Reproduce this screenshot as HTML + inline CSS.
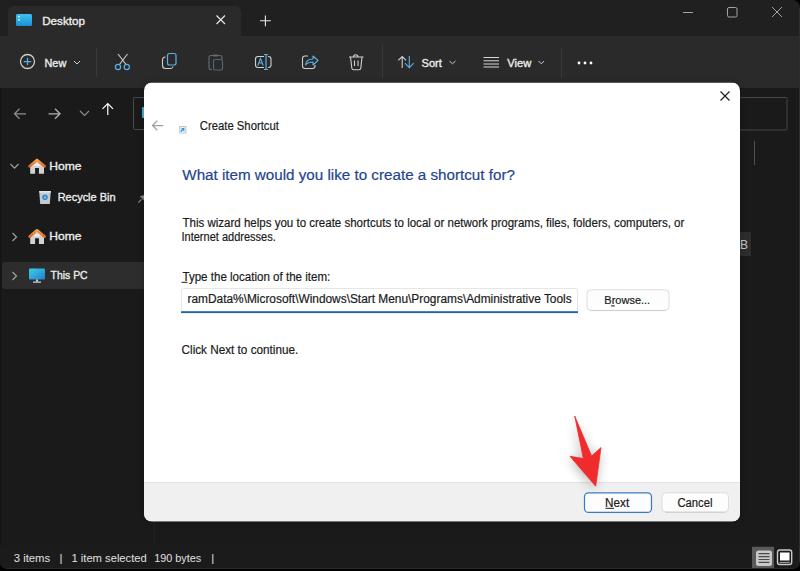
<!DOCTYPE html>
<html><head><meta charset="utf-8">
<style>
html,body{margin:0;padding:0;width:800px;height:571px;overflow:hidden;background:#000;}
svg{display:block;}
text{font-family:"Liberation Sans",sans-serif;}
</style></head><body>
<svg width="800" height="571" viewBox="0 0 800 571">
<defs>
<linearGradient id="gDesk" x1="0" y1="0" x2="0" y2="1"><stop offset="0" stop-color="#3cc4f0"/><stop offset="1" stop-color="#1b8fd6"/></linearGradient>
<linearGradient id="gMon" x1="0" y1="0" x2="1" y2="1"><stop offset="0" stop-color="#3fcfe6"/><stop offset="1" stop-color="#1d80d2"/></linearGradient>
<linearGradient id="gRoof" x1="0" y1="0" x2="0" y2="1"><stop offset="0" stop-color="#f5a347"/><stop offset="1" stop-color="#e0662a"/></linearGradient><filter id="shadow" x="-20%" y="-20%" width="140%" height="140%"><feGaussianBlur stdDeviation="3"/></filter><filter id="ashadow" x="-50%" y="-50%" width="200%" height="200%"><feGaussianBlur stdDeviation="6"/></filter>
<clipPath id="win"><path d="M0 0 H792 a8 8 0 0 1 8 8 V562 a7 7 0 0 1 -7 7 H7 a7 7 0 0 1 -7 -7 Z"/></clipPath>
</defs>

<!-- window -->
<g clip-path="url(#win)">
<rect x="0" y="0" width="800" height="571" fill="#1a1a1a"/>
<!-- title bar -->
<rect x="0" y="0" width="800" height="36" fill="#202020"/>
<path d="M8 36 V12 a6 6 0 0 1 6 -6 H235 a6 6 0 0 1 6 6 V36 Z" fill="#2a2a2a"/>
<!-- desktop icon -->
<rect x="16" y="14" width="16" height="12" rx="1.5" fill="url(#gDesk)"/>
<rect x="18" y="16" width="2" height="1.5" fill="#bfefff"/>
<rect x="18" y="19" width="2" height="1.5" fill="#bfefff"/>
<text id="t_desktop" x="42.2" y="25.2" font-size="11.2" fill="#ececec" stroke="#ececec" stroke-width="0.35" textLength="42.77" lengthAdjust="spacingAndGlyphs">Desktop</text>
<path d="M216.5 15.5 L225 24 M225 15.5 L216.5 24" stroke="#e8e8e8" stroke-width="1.2"/>
<path d="M260 20.7 H270.8 M265.4 15.5 V26.2" stroke="#e8e8e8" stroke-width="1.1"/>
<!-- window controls -->
<path d="M683 12.5 H693" stroke="#a4a4a4" stroke-width="1"/>
<rect x="727.5" y="7.5" width="9.5" height="9.5" rx="1.5" fill="none" stroke="#a4a4a4" stroke-width="1"/>
<path d="M772 7 L782 17 M782 7 L772 17" stroke="#a4a4a4" stroke-width="1"/>

<!-- toolbar -->
<rect x="0" y="36" width="800" height="52" fill="#2a2a2a"/>
<circle cx="27.5" cy="61.5" r="7" fill="none" stroke="#cfcfcf" stroke-width="1.3"/>
<path d="M27.5 57.8 V65.2 M23.8 61.5 H31.2" stroke="#5ab0e6" stroke-width="1.25"/>
<text id="t_new" x="44.42" y="66.9" font-size="11.3" fill="#ececec" stroke="#ececec" stroke-width="0.35" textLength="21.91" lengthAdjust="spacingAndGlyphs">New</text>
<path d="M74 61 L77 64 L80 61" fill="none" stroke="#cfcfcf" stroke-width="1"/>
<rect x="96" y="48" width="1" height="29" fill="#3a3a3a"/>
<!-- scissors -->
<path d="M118 54 L126 64.5 M127.5 54 L119.5 64.5" stroke="#d0d0d0" stroke-width="1.1"/>
<circle cx="118" cy="67" r="2.6" fill="none" stroke="#5ab0e6" stroke-width="1.2"/>
<circle cx="126.8" cy="67" r="2.6" fill="none" stroke="#5ab0e6" stroke-width="1.2"/>
<!-- copy -->
<path d="M165.5 57 a3 3 0 0 0 -3 3 V65.5 a3 3 0 0 0 3 3 H170.5 a2.5 2.5 0 0 0 2.5 -2" fill="none" stroke="#d0d0d0" stroke-width="1.1"/>
<rect x="167.5" y="53.5" width="8.5" height="11.5" rx="2" fill="none" stroke="#5ab0e6" stroke-width="1.2"/>
<!-- paste disabled -->
<path d="M212 69.5 H211 a2 2 0 0 1 -2 -2 V57.5 a2 2 0 0 1 2 -2 H220 a2 2 0 0 1 2 2 V59" fill="none" stroke="#6a6a6a" stroke-width="1.1"/>
<rect x="213.5" y="59.5" width="9" height="10.5" rx="1.5" fill="none" stroke="#4a6a80" stroke-width="1.1"/>
<rect x="213" y="54.5" width="5" height="2" rx="1" fill="#6a6a6a"/>
<!-- rename -->
<path d="M264 56.5 H258 a2.5 2.5 0 0 0 -2.5 2.5 V65 a2.5 2.5 0 0 0 2.5 2.5 H264 M268 56.5 H268.5 a2.5 2.5 0 0 1 2.5 2.5 V65 a2.5 2.5 0 0 1 -2.5 2.5 H268" fill="none" stroke="#d0d0d0" stroke-width="1.1"/>
<path d="M257.8 65.5 L260.5 58.5 L263.2 65.5 M258.8 63 H262.2" fill="none" stroke="#5ab0e6" stroke-width="1.1"/>
<path d="M266 54.5 V69.5 M264 54.5 H268 M264 69.5 H268" fill="none" stroke="#5ab0e6" stroke-width="1.2"/>
<!-- share -->
<path d="M308 56 H305 a2.5 2.5 0 0 0 -2.5 2.5 V66 a2.5 2.5 0 0 0 2.5 2.5 H312.5 a2.5 2.5 0 0 0 2.5 -2.5 V65" fill="none" stroke="#d0d0d0" stroke-width="1.1"/>
<path d="M305.5 65 C306 60.5 309 59 313 59 V56 L318 60.5 L313 65 V62 C310 62 307.5 62.5 305.5 65 Z" fill="none" stroke="#5ab0e6" stroke-width="1.1" stroke-linejoin="round"/>
<!-- trash -->
<path d="M349 57 H363.5 M353.5 57 a2.2 2.2 0 0 1 2.2 -2.2 a2.2 2.2 0 0 1 2.2 2.2 M350.5 57 L351.8 68 a2 2 0 0 0 2 1.8 H358.8 a2 2 0 0 0 2 -1.8 L362 57 M354.5 60.5 V66 M358 60.5 V66" fill="none" stroke="#d0d0d0" stroke-width="1.1"/>
<rect x="382" y="45" width="1" height="32.5" fill="#3a3a3a"/>
<!-- sort -->
<path d="M402.2 68 V56.5 M398.3 60.4 L402.2 56.5 L406.1 60.4" fill="none" stroke="#d0d0d0" stroke-width="1.1"/>
<path d="M409.3 56 V67.6 M404.9 63.2 L409.3 67.6 L413.7 63.2" fill="none" stroke="#5ab0e6" stroke-width="1.1"/>
<text id="t_sort" x="421.5" y="66.9" font-size="11.3" fill="#ececec" stroke="#ececec" stroke-width="0.35" textLength="20.39" lengthAdjust="spacingAndGlyphs">Sort</text>
<path d="M449.5 61 L452.5 63.8 L455.5 61" fill="none" stroke="#cfcfcf" stroke-width="1"/>
<!-- view -->
<path d="M483.5 57.5 H499 M483.5 60.8 H499 M483.5 64 H499 M483.5 67 H499" stroke="#d8d8d8" stroke-width="1"/>
<text id="t_view" x="507.2" y="67" font-size="11.3" fill="#ececec" stroke="#ececec" stroke-width="0.35" textLength="24.02" lengthAdjust="spacingAndGlyphs">View</text>
<path d="M538.5 61 L541.3 63.8 L544.1 61" fill="none" stroke="#cfcfcf" stroke-width="1"/>
<rect x="561" y="48" width="1" height="29.5" fill="#3a3a3a"/>
<circle cx="579" cy="63" r="1.4" fill="#ffffff"/>
<circle cx="585" cy="63" r="1.4" fill="#ffffff"/>
<circle cx="591" cy="63" r="1.4" fill="#ffffff"/>

<!-- nav row -->
<rect x="0" y="88" width="800" height="54" fill="#1a1a1a"/>
<path d="M26 113.8 H14.5 M19.5 108.8 L14.5 113.8 L19.5 118.8" fill="none" stroke="#8c8c8c" stroke-width="1.3"/>
<path d="M48.5 113.8 H60 M55 108.8 L60 113.8 L55 118.8" fill="none" stroke="#b0b0b0" stroke-width="1.3"/>
<path d="M80 111 L84.5 115.5 L89 111" fill="none" stroke="#8c8c8c" stroke-width="1.2"/>
<path d="M107.8 115 V103.5 M102.5 108.8 L107.8 103.5 L113 108.8" fill="none" stroke="#ffffff" stroke-width="1.2"/>
<rect x="133.5" y="97.5" width="60" height="32" rx="0.8" fill="#1a1a1a" stroke="#474747" stroke-width="1"/>
<rect x="142" y="107" width="4" height="11" rx="1" fill="#48b4d6"/>
<rect x="700" y="97.5" width="87" height="32.5" rx="0.8" fill="#1a1a1a" stroke="#474747" stroke-width="1"/>

<!-- sidebar -->
<rect x="0" y="142" width="154" height="403" fill="#1a1a1a"/><rect x="0" y="88" width="1.5" height="481" fill="#141414"/>
<rect x="154" y="142" width="1" height="403" fill="#222222"/>
<path d="M10.5 164 L14.5 168.2 L18.5 164" fill="none" stroke="#a0a0a0" stroke-width="1.2"/>
<g id="home1">
<path d="M30.2 166.5 L37 160.8 L44 166.5 V173.8 H38.9 V168 H35.1 V173.8 H30.2 Z" fill="#d2d2d2"/><path d="M33 166 L37 162.6 L41 166 Z" fill="#ececec"/>
<path d="M29.6 166.3 L37 160 L44.6 166.3" fill="none" stroke="url(#gRoof)" stroke-width="2.7" stroke-linejoin="round" stroke-linecap="round"/>
</g>
<text id="t_home1" x="49.3" y="170" font-size="11.3" fill="#ececec" stroke="#ececec" stroke-width="0.35" textLength="32.3" lengthAdjust="spacingAndGlyphs">Home</text>
<!-- recycle bin -->
<path d="M39.2 191 H50.8 L49.8 204 H40.2 Z" fill="#c6c9cc"/><rect x="39.2" y="191" width="11.6" height="1.6" fill="#e4e6e8"/><circle cx="45" cy="197.3" r="2.8" fill="#2f8fd6"/><circle cx="45" cy="197.5" r="1.1" fill="#8fcaf0"/>
<text id="t_rb" x="57.64" y="201.2" font-size="11.5" fill="#ececec" stroke="#ececec" stroke-width="0.35" textLength="57.94" lengthAdjust="spacingAndGlyphs">Recycle Bin</text>
<path d="M138.3 202.6 L141.5 199.4" stroke="#8a8a8a" stroke-width="1.2"/><path d="M139.8 196.2 L144.5 200.9 L146 194.5 Z" fill="#8a8a8a"/>
<path d="M12.5 233 L16.5 237 L12.5 241" fill="none" stroke="#a0a0a0" stroke-width="1.2"/>
<g transform="translate(0,70.3)">
<path d="M30.2 166.5 L37 160.8 L44 166.5 V173.8 H38.9 V168 H35.1 V173.8 H30.2 Z" fill="#d2d2d2"/><path d="M33 166 L37 162.6 L41 166 Z" fill="#ececec"/>
<path d="M29.6 166.3 L37 160 L44.6 166.3" fill="none" stroke="url(#gRoof)" stroke-width="2.7" stroke-linejoin="round" stroke-linecap="round"/>
</g>
<text id="t_home2" x="49.3" y="240.3" font-size="11.3" fill="#ececec" stroke="#ececec" stroke-width="0.35" textLength="32.3" lengthAdjust="spacingAndGlyphs">Home</text>
<!-- this pc selected -->
<rect x="2" y="262" width="152" height="27" rx="3" fill="#2d2d2d"/>
<path d="M12.5 272 L16.5 276 L12.5 280" fill="none" stroke="#a0a0a0" stroke-width="1.2"/>
<rect x="29" y="268.5" width="16" height="11" rx="1" fill="url(#gMon)"/>
<rect x="36" y="279.5" width="2" height="2" fill="#cfd8dd"/>
<rect x="33" y="281.5" width="8" height="1.2" fill="#cfd8dd"/>
<text id="t_pc" x="50.6" y="279" font-size="10.8" fill="#ececec" stroke="#ececec" stroke-width="0.35" textLength="37.03" lengthAdjust="spacingAndGlyphs">This PC</text>

<!-- content right -->
<rect x="754" y="141" width="1" height="24" fill="#505050"/>
<rect x="738" y="232" width="13" height="24" fill="#2d2d2d"/>
<text id="t_B" x="740" y="248.8" font-size="12" fill="#c4c4c4">B</text>

<!-- status bar -->
<rect x="0" y="545" width="800" height="24" fill="#1b1b1b"/>
<text id="t_s1" x="13.78" y="562.2" font-size="11.3" fill="#e0e0e0" textLength="36.42" lengthAdjust="spacingAndGlyphs">3 items</text><text id="t_s2" x="59.5" y="562.2" font-size="11.3" fill="#e0e0e0">|</text><text id="t_s3" x="71.48" y="562.2" font-size="11.3" fill="#e0e0e0" textLength="75.28" lengthAdjust="spacingAndGlyphs">1 item selected</text><text id="t_s4" x="154.28" y="562.2" font-size="11.3" fill="#e0e0e0" textLength="46.9" lengthAdjust="spacingAndGlyphs">190 bytes</text><text id="t_s5" x="211.2" y="562.2" font-size="11.3" fill="#e0e0e0">|</text>
<rect x="752" y="546.8" width="22" height="22.2" fill="#5a5a5a"/>
<rect x="756" y="550.5" width="16" height="15.5" rx="2.5" fill="#c9c9c9"/>
<path d="M758.5 553.6 H769.5 M758.5 556.6 H769.5 M758.5 559.5 H769.5 M758.5 562.4 H769.5" stroke="#4a4a4a" stroke-width="1.1"/>
<rect x="777.5" y="550" width="14.2" height="14.5" rx="2.2" fill="#1a1a1a" stroke="#c9c9c9" stroke-width="1.4"/>
<rect x="780" y="552.5" width="9.5" height="8" fill="#ffffff"/>
<path d="M779.5 562.4 H789.8" stroke="#a8a8a8" stroke-width="1"/>
<path d="M799.5 8 V562" stroke="#2e2e2e" stroke-width="1"/><path d="M7 568.5 H793" stroke="#2a2a2a" stroke-width="1"/>
</g>

<!-- dialog -->
<rect x="144" y="82.5" width="596" height="439" rx="8" fill="#000" opacity="0.25" filter="url(#shadow)"/>
<clipPath id="dlg"><rect x="144" y="82.5" width="596" height="439" rx="8"/></clipPath>
<g clip-path="url(#dlg)">
<rect x="144" y="82.5" width="596" height="439" fill="#ffffff"/>
<rect x="144" y="482.5" width="596" height="39" fill="#f0f0f0"/>
<rect x="144" y="482" width="596" height="1" fill="#e3e3e3"/>
</g>
<path d="M720.5 91.5 L729.5 100.5 M729.5 91.5 L720.5 100.5" stroke="#1a1a1a" stroke-width="1.1"/>
<path d="M163.3 125.5 H152.5 M157.3 120.7 L152.5 125.5 L157.3 130.3" fill="none" stroke="#a0a0a0" stroke-width="1.25"/>
<rect x="179.5" y="126.5" width="6.5" height="6.5" fill="#e6f0f8" stroke="#b8b8b8" stroke-width="0.8"/><rect x="179.5" y="128.5" width="4.5" height="4.5" fill="#cfe4f5"/><path d="M180.8 131.5 L183.6 128.7 M181.6 128.5 H183.8 V130.7" fill="none" stroke="#3592d6" stroke-width="1.1"/>
<text id="t_cs" x="199.78" y="129.8" font-size="12" fill="#1b1b1b" textLength="79.15" lengthAdjust="spacingAndGlyphs" stroke="#1b1b1b" stroke-width="0.2">Create Shortcut</text>
<text id="t_head" x="182.3" y="180" font-size="15.2" fill="#24448f" textLength="332.59" lengthAdjust="spacingAndGlyphs" stroke="#24448f" stroke-width="0.2">What item would you like to create a shortcut for?</text>
<text id="t_b1" x="182.5" y="226.6" font-size="12" fill="#1b1b1b" textLength="501.79" lengthAdjust="spacingAndGlyphs" stroke="#1b1b1b" stroke-width="0.2">This wizard helps you to create shortcuts to local or network programs, files, folders, computers, or</text>
<text id="t_b2" x="181.5" y="240.6" font-size="12" fill="#1b1b1b" textLength="94.25" lengthAdjust="spacingAndGlyphs" stroke="#1b1b1b" stroke-width="0.2">Internet addresses.</text>
<text id="t_label" x="182.5" y="280.5" font-size="12" fill="#1b1b1b" textLength="147.73" lengthAdjust="spacingAndGlyphs" stroke="#1b1b1b" stroke-width="0.2">Type the location of the item:</text>
<rect x="181.5" y="281.8" width="6" height="1" fill="#1b1b1b"/>
<rect x="181.5" y="288.5" width="396" height="24" rx="2" fill="#ffffff" stroke="#e6e6e6" stroke-width="1"/>
<rect x="181" y="311.2" width="397" height="1.9" fill="#2464aa"/>
<text id="t_tb" x="187.5" y="303.3" font-size="12" fill="#1b1b1b" textLength="384.14" lengthAdjust="spacingAndGlyphs" stroke="#1b1b1b" stroke-width="0.2">ramData%\Microsoft\Windows\Start Menu\Programs\Administrative Tools</text>
<rect x="587" y="289.8" width="82" height="20.6" rx="4" fill="#fdfdfd" stroke="#dcdcdc" stroke-width="1"/><path d="M590 310.6 H666" stroke="#c8c8c8" stroke-width="0.8"/>
<text id="t_browse" x="604.32" y="304.1" font-size="11.6" fill="#1b1b1b" textLength="45.86" lengthAdjust="spacingAndGlyphs" stroke="#1b1b1b" stroke-width="0.2">Browse...</text>
<text id="t_click" x="181.56" y="354" font-size="12" fill="#1b1b1b" textLength="116.74" lengthAdjust="spacingAndGlyphs" stroke="#1b1b1b" stroke-width="0.2">Click Next to continue.</text>
<rect x="584.5" y="492.8" width="67" height="19.6" rx="4" fill="#fdfdfd" stroke="#3a7cc2" stroke-width="1.25"/>
<text id="t_next" x="605.08" y="506.8" font-size="12" fill="#1b1b1b" textLength="24.12" lengthAdjust="spacingAndGlyphs" stroke="#1b1b1b" stroke-width="0.2">Next</text>
<rect x="605.5" y="507.8" width="8.5" height="1" fill="#1b1b1b"/>
<rect x="611" y="305.4" width="3.8" height="1" fill="#1b1b1b"/>
<rect x="662" y="492.8" width="66.5" height="19.2" rx="4" fill="#fdfdfd" stroke="#dcdcdc" stroke-width="1"/><path d="M665 512.3 H725.5" stroke="#c8c8c8" stroke-width="0.8"/>
<text id="t_cancel" x="677.5" y="506.8" font-size="12" fill="#1b1b1b" textLength="34.95" lengthAdjust="spacingAndGlyphs" stroke="#1b1b1b" stroke-width="0.2">Cancel</text>

<!-- red arrow -->
<path d="M574.7 416 L583.4 458.6 L570 456.3 L595.7 486.2 L601 447.6 L591.6 456 Z" fill="#000" opacity="0.32" filter="url(#ashadow)" transform="translate(-1,2)"/>
<path d="M574.7 416 L583.4 458.6 L570 456.3 L595.7 486.2 L601 447.6 L591.6 456 Z" fill="#ef2b2b" stroke="#ef2b2b" stroke-width="0.8" stroke-linejoin="round"/>
</svg>
</body></html>
